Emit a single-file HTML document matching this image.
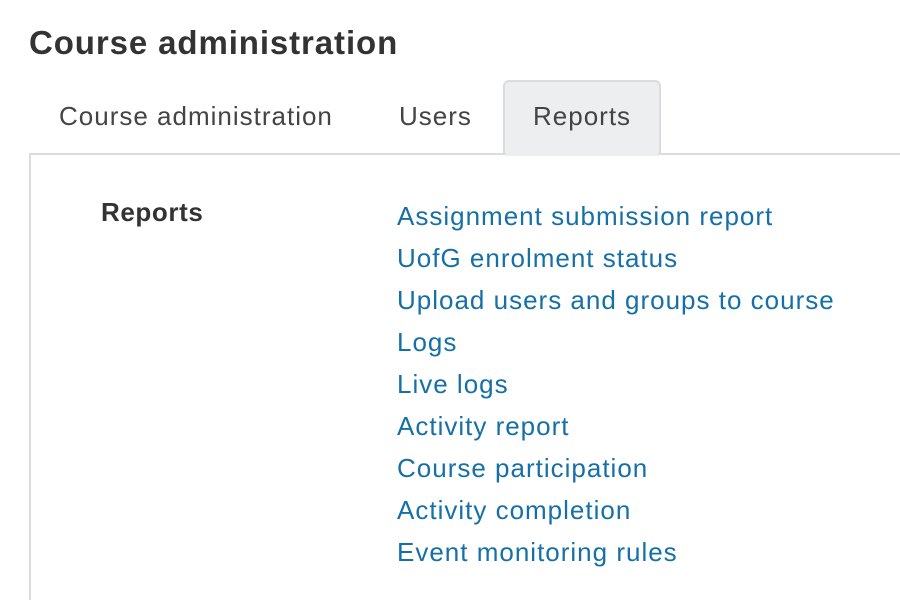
<!DOCTYPE html>
<html><head><style>
body{margin:0;width:900px;height:600px;background:#fff;font-family:"Liberation Sans",sans-serif;overflow:hidden;position:relative}
.t{position:absolute;white-space:nowrap}
h1{position:absolute;left:29px;top:24px;margin:0;font-size:33px;font-weight:bold;color:#333;letter-spacing:0.9px}
.tab{font-size:26px;color:#444;top:101px;letter-spacing:1px}
.act{position:absolute;left:503px;top:80px;width:158px;height:75px;background:#eceeef;border:2px solid #dcdcdc;border-bottom:none;border-radius:6px 6px 0 0;box-sizing:border-box}
.line{position:absolute;left:29px;top:153px;width:871px;height:2px;background:#dcdcdc}
.vl{position:absolute;left:29px;top:153px;width:2px;height:447px;background:#dcdcdc}
.a{font-size:26px;color:#1670a8;left:397px;letter-spacing:1px}
</style></head><body>
<h1>Course administration</h1>
<div class="act"></div>
<div class="line"></div>
<div class="act" style="border:none;height:4px;top:152px;left:505px;width:154px"></div>
<div class="vl"></div>
<div class="t tab" style="left:59px">Course administration</div>
<div class="t tab" style="left:399px">Users</div>
<div class="t tab" style="left:533px">Reports</div>
<div class="t" style="left:101px;top:197px;font-size:26px;font-weight:bold;color:#333;letter-spacing:0.6px">Reports</div>
<div class="t a" style="top:201px">Assignment submission report</div>
<div class="t a" style="top:243px">UofG enrolment status</div>
<div class="t a" style="top:285px">Upload users and groups to course</div>
<div class="t a" style="top:327px">Logs</div>
<div class="t a" style="top:369px">Live logs</div>
<div class="t a" style="top:411px">Activity report</div>
<div class="t a" style="top:453px">Course participation</div>
<div class="t a" style="top:495px">Activity completion</div>
<div class="t a" style="top:537px">Event monitoring rules</div>
</body></html>
